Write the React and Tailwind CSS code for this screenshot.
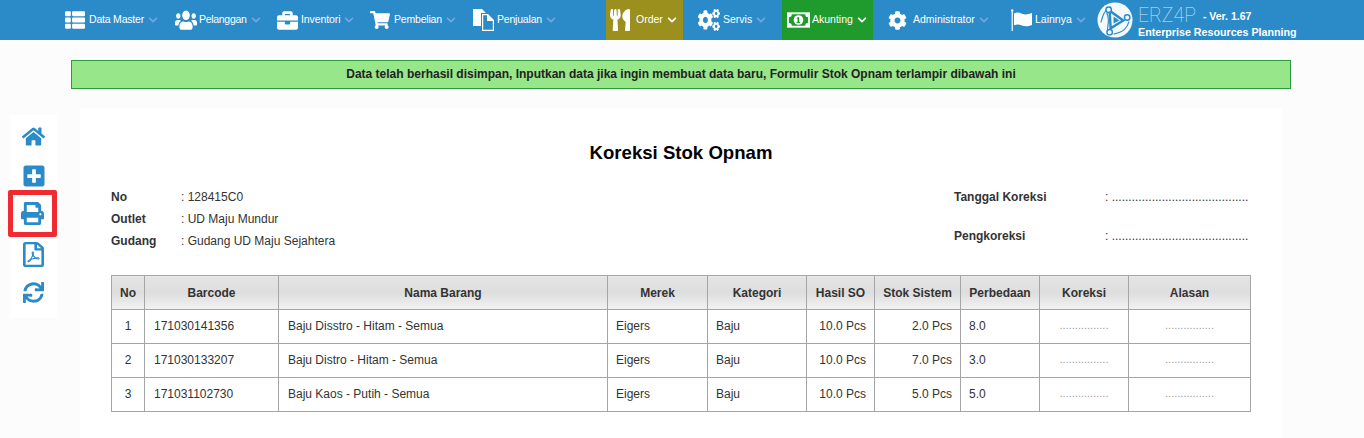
import { FaThList, FaUsers, FaBriefcase, FaShoppingCart, FaUtensils, FaCogs, FaCog, FaChevronDown, FaHome, FaPlusSquare, FaPrint, FaRegFilePdf, FaSync } from "react-icons/fa";

function DocsIcon({ className }) {
  return (
    <svg viewBox="0 0 21 22" fill="white" className={className}>
      <path d="M0 0h9l4 4H8v13H0z" />
      <path fillRule="evenodd" d="M9 5h6l6 6v11H9zM10.200 6.200v14.600h9.600V12h-5.800V6.200z" />
      <path d="M15.200 6.500l4.300 4.300h-4.300z" />
    </svg>
  );
}

function MoneyIcon({ className }) {
  return (
    <svg viewBox="0 0 24 16" className={className}>
      <rect width="24" height="16" fill="white" />
      <path d="M5 2h14c0 2 1 3 3 3v6c-2 0-3 1-3 3H5c0-2-1-3-3-3V5c2 0 3-1 3-3z" fill="#1f9b2e" />
      <circle cx="12" cy="8" r="5" fill="white" />
      <path d="M11 5h1.700v5h1v1H10v-1h1V6.500h-1z" fill="#1f9b2e" />
    </svg>
  );
}

function FlagIcon({ className }) {
  return (
    <svg viewBox="0 0 21 22" fill="white" className={className}>
      <circle cx="1.200" cy="1.500" r="1.200" />
      <rect x="0.600" y="2" width="1.200" height="20" />
      <path d="M3 4.500c3-1.500 5-1 8 .2 3 1.200 6 .8 10-.7v12c-4 1.500-7 1.700-10 .5-3-1.200-5-1.500-8-.2z" />
    </svg>
  );
}

const MENU = [
  { label: "Data Master", Icon: FaThList, box: "w-[170px] pl-[65px]", icon: "w-[24px]", svg: "w-[20px] h-[20px]", text: "tracking-[-0.2px]" },
  { label: "Pelanggan", Icon: FaUsers, box: "w-[102px] pl-[5px]", icon: "w-[24px]", svg: "w-[22px] h-[22px]", text: "tracking-[-0.3px]", stretch: true },
  { label: "Inventori", Icon: FaBriefcase, box: "w-[93px] pl-[5px]", icon: "w-[24px]", svg: "w-[21px] h-[21px]", text: "tracking-[-0.1px]", stretch: true },
  { label: "Pembelian", Icon: FaShoppingCart, box: "w-[103px] pl-[5px]", icon: "w-[24px]", svg: "w-[20px] h-[20px]", text: "tracking-[-0.2px]" },
  { label: "Penjualan", Icon: DocsIcon, box: "w-[138px] pl-[5px]", icon: "w-[24px]", svg: "w-[21px] h-[22px]", text: "tracking-[-0.2px]" },
  { label: "Order", Icon: FaUtensils, box: "w-[77px] pl-[4px] bg-[#9b8f1e]", icon: "w-[26px]", svg: "w-[20px] h-[22px]", text: "", active: true, stretch: true },
  { label: "Servis", Icon: FaCogs, box: "w-[99px] pl-[15px]", icon: "w-[25px]", svg: "w-[22px] h-[22px]", text: "", stretch: true },
  { label: "Akunting", Icon: MoneyIcon, box: "w-[91px] pl-[5px] bg-[#1f9b2e]", icon: "w-[25px]", svg: "w-[23px] h-[16px]", text: "", active: true },
  { label: "Administrator", Icon: FaCog, box: "w-[123px] pl-[15px]", icon: "w-[25px]", svg: "w-[19px] h-[19px]", text: "" },
  { label: "Lainnya", Icon: FlagIcon, box: "w-[96px] pl-[15px]", icon: "w-[24px]", svg: "w-[21px] h-[22px]", text: "" },
];

const SIDE = [
  { Icon: FaHome, svg: "w-[23px] h-[23px]", box: "h-[42px] pt-[1px]" },
  { Icon: FaPlusSquare, svg: "w-[24px] h-[24px]", box: "h-[33px] pt-[4px]" },
  { Icon: FaPrint, svg: "w-[23px] h-[23px]", box: "h-[47px] border-[5px] border-[#ee2b30] rounded-[2px] -ml-[2px]" },
  { Icon: FaRegFilePdf, svg: "w-[21px] h-[25px]", box: "h-[34px] pr-[1px]", stretch: true },
  { Icon: FaSync, svg: "w-[21px] h-[21px]", box: "h-[42px] pr-[1px]" },
];

const ROWS = [
  { no: 1, barcode: "171030141356", nama: "Baju Disstro - Hitam - Semua", so: "10.0 Pcs", stok: "2.0 Pcs", beda: "8.0" },
  { no: 2, barcode: "171030133207", nama: "Baju Distro - Hitam - Semua", so: "10.0 Pcs", stok: "7.0 Pcs", beda: "3.0" },
  { no: 3, barcode: "171031102730", nama: "Baju Kaos - Putih - Semua", so: "10.0 Pcs", stok: "5.0 Pcs", beda: "5.0" },
];

const HEADS = [
  { label: "No", w: "w-[33px]" },
  { label: "Barcode", w: "w-[134px]" },
  { label: "Nama Barang", w: "w-[329px]" },
  { label: "Merek", w: "w-[100px]" },
  { label: "Kategori", w: "w-[99px]" },
  { label: "Hasil SO", w: "w-[68px]" },
  { label: "Stok Sistem", w: "w-[86px]" },
  { label: "Perbedaan", w: "w-[79px]" },
  { label: "Koreksi", w: "w-[89px]" },
  { label: "Alasan", w: "w-[122px]" },
];

const cell = "border border-[#a3a5a8] px-[9px] pb-[2px] h-[34px]";

function Logo() {
  return (
    <svg width="36" height="36" viewBox="0 0 37 37" className="shrink-0">
      <circle cx="18.500" cy="18.500" r="18" fill="#f4f9fc" />
      <path d="M13 9 L27 19 L14 27 Z" fill="none" stroke="#2b8bc9" strokeWidth="2.500" />
      <path d="M4 21 C6 14 7 9 14 5 M33 20 C31 27 27 31 17 33 M10 11 C14 20 10 24 11 30" fill="none" stroke="#2b8bc9" strokeWidth="1.200" />
      <circle cx="12" cy="8" r="2.800" fill="#f4f9fc" stroke="#2b8bc9" strokeWidth="1.500" />
      <circle cx="31" cy="16" r="2.800" fill="#f4f9fc" stroke="#2b8bc9" strokeWidth="1.500" />
      <circle cx="13" cy="31" r="2.800" fill="#f4f9fc" stroke="#2b8bc9" strokeWidth="1.500" />
      <path d="M17 15 L23 19 L17 22 Z" fill="#2b8bc9" />
    </svg>
  );
}

export default function App() {
  return (
    <div className="h-[438px] overflow-hidden bg-[#fcfcfc] text-[12px] text-[#333] font-['Liberation_Sans',Arial,sans-serif]">
      <nav className="h-[40px] flex bg-[#2b8bc9] text-white text-[10.5px]">
        {MENU.map(({ label, Icon, box, icon, svg, text, active, stretch }) => (
          <div key={label} className={`h-full shrink-0 flex items-center ${box}`}>
            <span className={`${icon} flex justify-start shrink-0`}>
              <Icon className={svg} {...(stretch ? { preserveAspectRatio: "none" } : {})} />
            </span>
            <span className={`whitespace-nowrap ${text}`}>{label}</span>
            <FaChevronDown size={10} className={`ml-[4px] ${active ? "text-white" : "text-[#74a6df]"}`} />
          </div>
        ))}
        <div className="flex items-center gap-[5px] shrink-0 ml-[5px]">
          <Logo />
          <div className="leading-none pt-[2px]">
            <div className="flex items-center gap-[7px] h-[22px]">
              <span className="font-['Roboto',sans-serif] font-thin text-[19.500px] text-[#cfe6f4]">ERZ4P</span>
              <span className="font-bold text-[10.500px] mt-[2px]">- Ver. 1.67</span>
            </div>
            <div className="font-bold text-[10.700px]">Enterprise Resources Planning</div>
          </div>
        </div>
      </nav>

      <div className="mx-[71px] w-[1220px] mt-[20px] h-[29px] pb-[2px] bg-[#97e68a] border border-[#2b9b3c] flex items-center justify-center font-bold text-[#222]">
        Data telah berhasil disimpan, Inputkan data jika ingin membuat data baru, Formulir Stok Opnam terlampir dibawah ini
      </div>

      <div className="flex mt-[19px]">
        <div className="w-[80px] shrink-0 pt-[7px] pl-[10px]">
          <div className="w-[47px] h-[203px] bg-white flex flex-col text-[#2b8bc9]">
            {SIDE.map(({ Icon, svg, box, stretch }, i) => (
              <div key={i} className={`flex items-center justify-center shrink-0 ${box}`}>
                <Icon className={svg} {...(stretch ? { preserveAspectRatio: "none" } : {})} />
              </div>
            ))}
          </div>
        </div>

        <div className="w-[1202px] bg-white h-[330px] px-[31px] pt-[35px]">
          <h1 className="text-center text-[18.600px] leading-[20px] font-bold text-black w-[1140px]">Koreksi Stok Opnam</h1>

          <div className="flex justify-between mt-[23px] w-[1140px]">
            <div className="leading-[22px]">
              <div className="flex"><b className="w-[70px]">No</b><span>: 128415C0</span></div>
              <div className="flex"><b className="w-[70px]">Outlet</b><span>: UD Maju Mundur</span></div>
              <div className="flex"><b className="w-[70px]">Gudang</b><span>: Gudang UD Maju Sejahtera</span></div>
            </div>
            <div className="w-[297px] leading-[22px] whitespace-nowrap">
              <div className="flex"><b className="w-[151px]">Tanggal Koreksi</b><span>: .........................................</span></div>
              <div className="flex mt-[17px]"><b className="w-[151px]">Pengkoreksi</b><span>: .........................................</span></div>
            </div>
          </div>

          <table className="mt-[23px] w-[1139px] table-fixed border-collapse">
            <thead>
              <tr>
                {HEADS.map((h) => (
                  <th key={h.label} className={`${h.w} border border-[#a3a5a8] h-[34px] p-0 font-bold bg-gradient-to-b from-[#e4e4e4] via-[#dedede] to-[#f2f2f2]`}>{h.label}</th>
                ))}
              </tr>
            </thead>
            <tbody>
              {ROWS.map((r) => (
                <tr key={r.no}>
                  <td className={`${cell} text-center`}>{r.no}</td>
                  <td className={cell}>{r.barcode}</td>
                  <td className={cell}>{r.nama}</td>
                  <td className={`${cell} !pl-[8px]`}>Eigers</td>
                  <td className={`${cell} !pl-[8px]`}>Baju</td>
                  <td className={`${cell} text-right !px-[8px]`}>{r.so}</td>
                  <td className={`${cell} text-right !px-[8px]`}>{r.stok}</td>
                  <td className={`${cell} !pl-[8px]`}>{r.beda}</td>
                  <td className={`${cell} text-center text-[11px] text-[#999]`}>................</td>
                  <td className={`${cell} text-center text-[11px] text-[#999]`}>................</td>
                </tr>
              ))}
            </tbody>
          </table>
        </div>
      </div>
    </div>
  );
}
